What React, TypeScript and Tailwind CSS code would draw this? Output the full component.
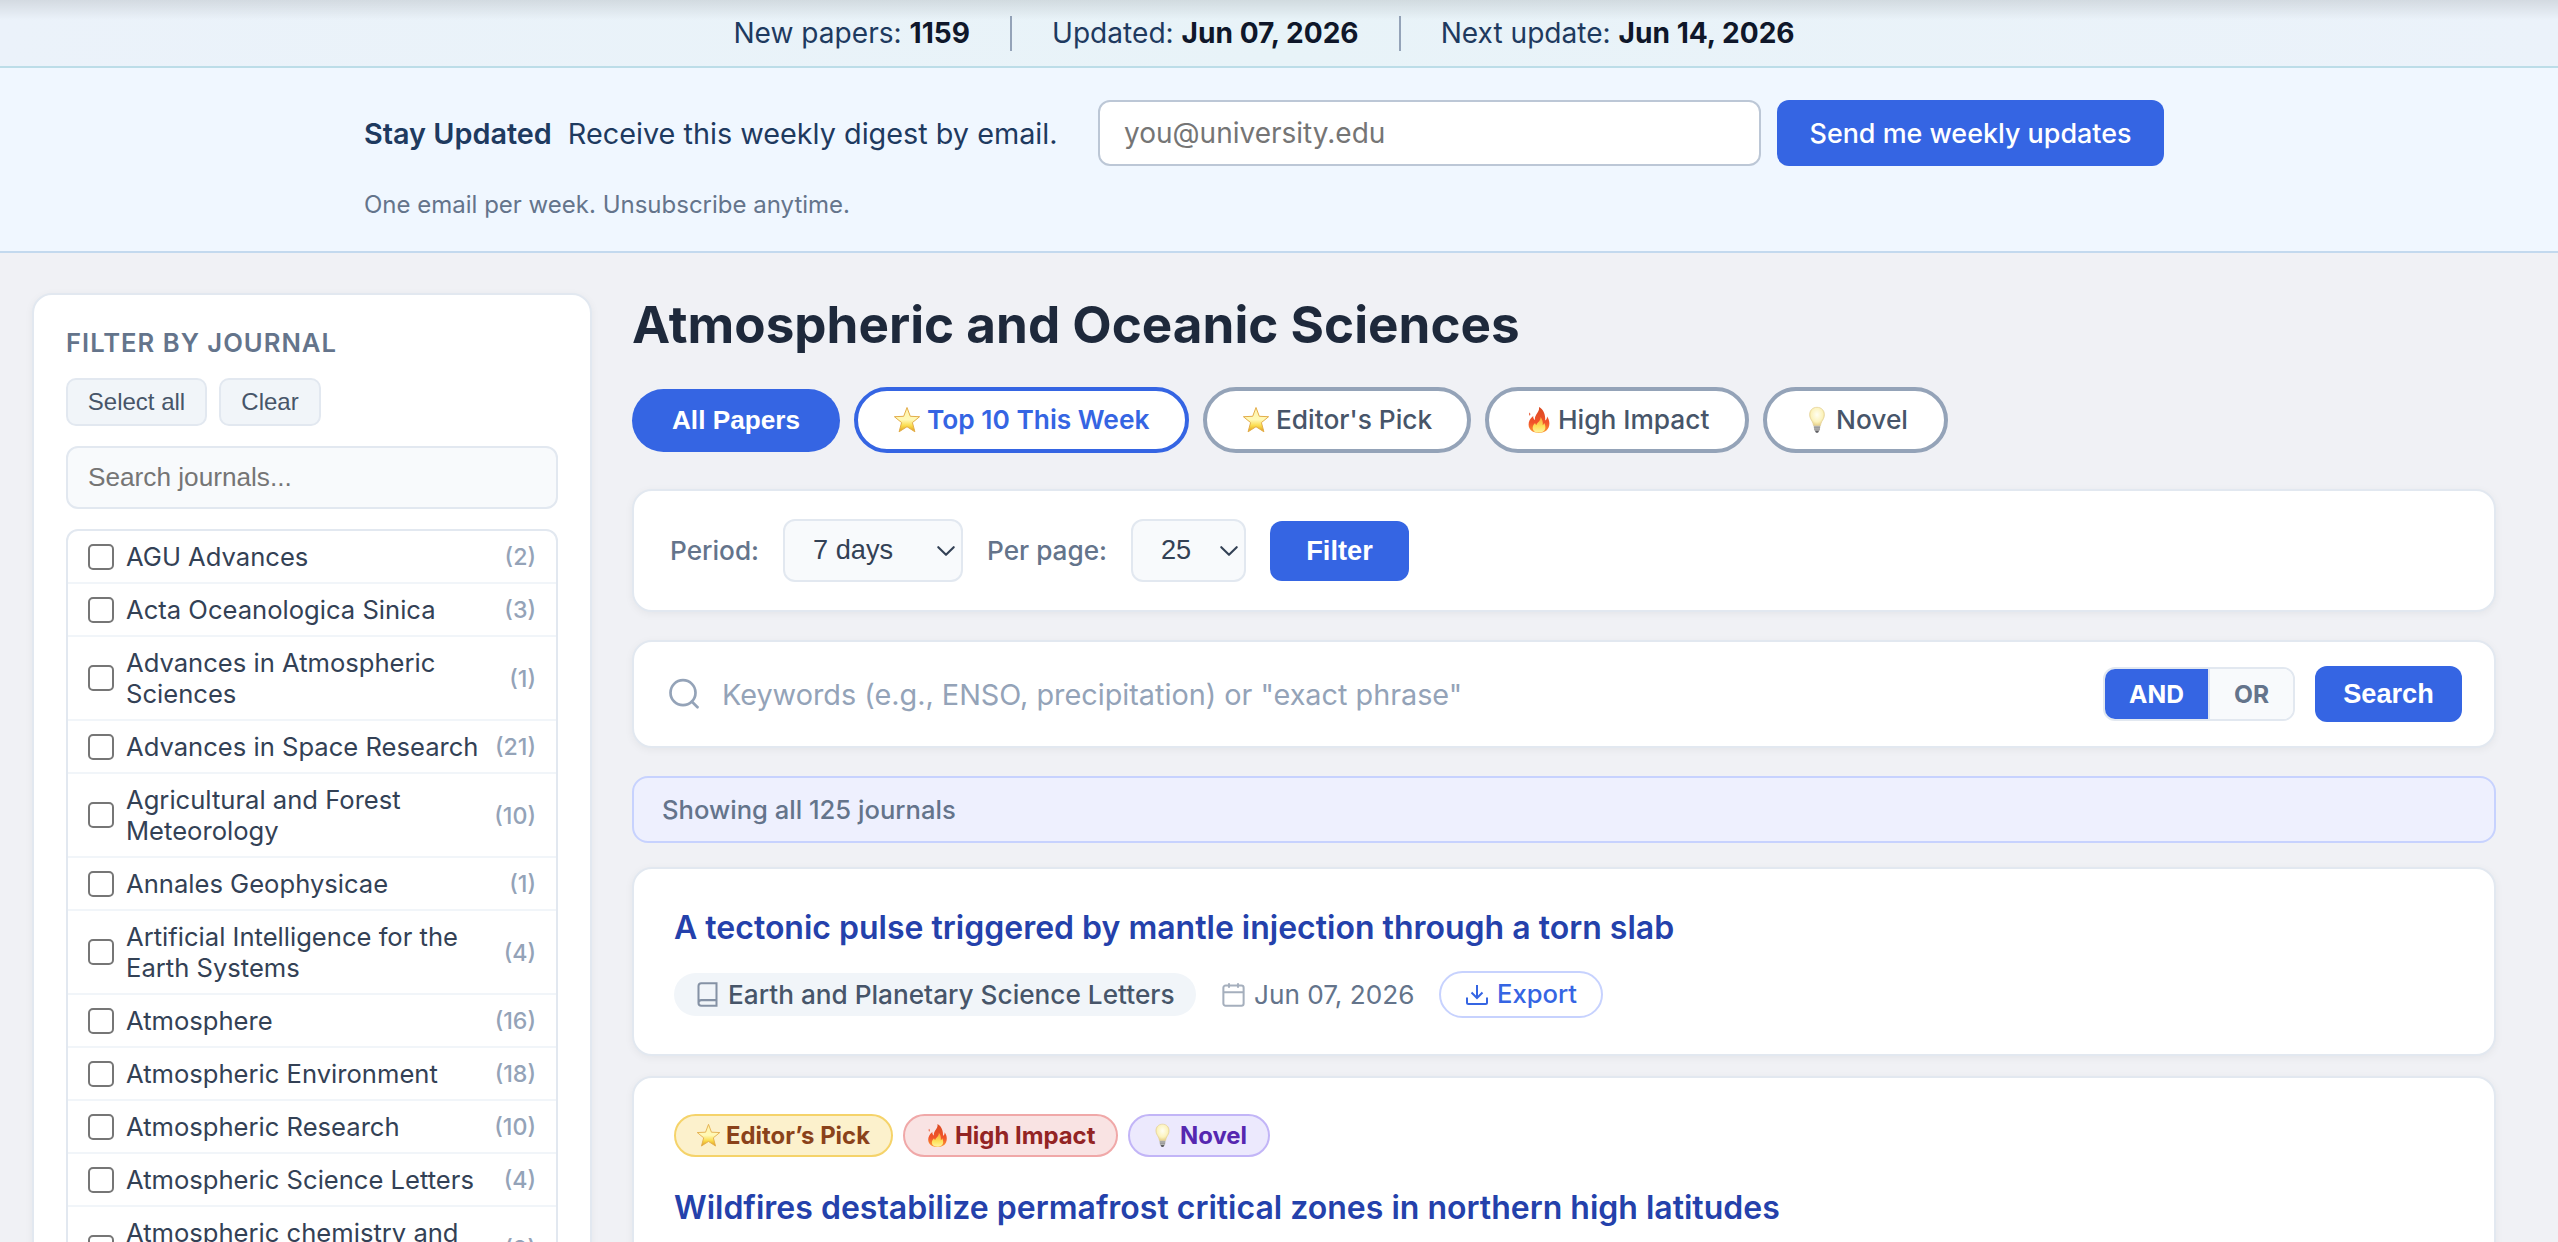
import { useState } from "react"
import type { ReactNode } from "react"

const journals: [string, number][] = [
  ["AGU Advances", 2],
  ["Acta Oceanologica Sinica", 3],
  ["Advances in Atmospheric Sciences", 1],
  ["Advances in Space Research", 21],
  ["Agricultural and Forest Meteorology", 10],
  ["Annales Geophysicae", 1],
  ["Artificial Intelligence for the Earth Systems", 4],
  ["Atmosphere", 16],
  ["Atmospheric Environment", 18],
  ["Atmospheric Research", 10],
  ["Atmospheric Science Letters", 4],
  ["Atmospheric chemistry and physics", 9],
]

/* Emoji icons */
function Star({ className }: { className: string }) {
  return (
    <svg viewBox="0 0 28 28" className={className}>
      <defs>
        <linearGradient id="starFill" x1="0" y1="0" x2="0" y2="1">
          <stop offset="0" stopColor="#fff3a8" />
          <stop offset="0.5" stopColor="#fff9b8" />
          <stop offset="0.75" stopColor="#fbdc4c" />
          <stop offset="1" stopColor="#dd9a1c" />
        </linearGradient>
      </defs>
      <path
        d="M14 1.5 17.3 10.3 26.6 10.7 19.4 16.6 21.9 25.8 14 20.7 6.1 25.8 8.6 16.6 1.4 10.7 10.7 10.3Z"
        fill="url(#starFill)"
        stroke="#e3ad4a"
        strokeWidth="1"
        strokeLinejoin="round"
      />
    </svg>
  )
}

function Flame({ className }: { className: string }) {
  return (
    <svg viewBox="0 0 28 28" className={className}>
      <defs>
        <linearGradient id="flameFill" x1="0" y1="0" x2="0" y2="1">
          <stop offset="0" stopColor="#d94a22" />
          <stop offset="0.6" stopColor="#f2542b" />
          <stop offset="1" stopColor="#fb9a2e" />
        </linearGradient>
        <linearGradient id="flameCore" x1="0" y1="0" x2="0" y2="1">
          <stop offset="0" stopColor="#f9a03a" />
          <stop offset="0.6" stopColor="#fde25a" />
          <stop offset="1" stopColor="#fff3a0" />
        </linearGradient>
      </defs>
      <path
        d="M14 1c.6 3.2-1.2 5.2-2.7 7.6-1.2 1.9-1.7 3.6-1.3 5.4-1.4-.8-1.9-2.2-1.8-4C5 12.6 3.6 15.5 3.6 18.6 3.6 24 8 27 13.9 27c6.2 0 10.5-3.6 10.5-9.4 0-2.9-.9-5.2-2.4-7.2.1 1.9-.5 3.2-1.8 4C20.5 8.6 18.6 3.6 14 1Z"
        fill="url(#flameFill)"
      />
      <path d="M4.500 6.500c-.6 1.200-.5 2.300.2 3.200.9-.9.8-2.100-.2-3.200Z" fill="#e8502a" />
      <path
        d="M15.5 11c.2 2.6-1.1 4.1-2.600 5.600-.8.8-1.3 1.6-1.500 2.500-.8-.5-1.200-1.200-1.300-2.100-1.700 1.700-2.600 3.400-2.400 5.400.3 2.800 2.800 4.200 6.200 4.200 3.800 0 6.500-1.900 6.500-5.300 0-1.600-.4-2.900-1.200-4.200-.2 1-.7 1.700-1.500 2.100.4-3.200-.3-6.100-2.200-8.200Z"
        fill="url(#flameCore)"
      />
    </svg>
  )
}

function Bulb({ className }: { className: string }) {
  return (
    <svg viewBox="0 0 28 28" className={className}>
      <defs>
        <radialGradient id="bulbGlass" cx="0.5" cy="0.4" r="0.6">
          <stop offset="0" stopColor="#fffef2" />
          <stop offset="0.65" stopColor="#fcf3bd" />
          <stop offset="1" stopColor="#e6cf85" />
        </radialGradient>
      </defs>
      <path
        d="M14 1.3C9.5 1.3 6.6 4.5 6.6 8.7c0 3 1.5 4.9 2.7 7 .8 1.4.9 2.8 1.3 4.1h6.8c.4-1.3.5-2.7 1.3-4.1 1.2-2.1 2.7-4 2.7-7 0-4.2-2.9-7.4-7.4-7.4Z"
        fill="url(#bulbGlass)"
        stroke="#e3cf92"
        strokeWidth="0.7"
      />
      <path d="M10.7 19.8h6.6l-.5 4.7h-5.6Z" fill="#b9b9b5" />
      <path d="M10.9 21.3h6.2M11.1 23.1h5.8" stroke="#85858a" strokeWidth="0.7" />
      <path d="M11.7 24.5h4.6L15 26.8h-2Z" fill="#5e5e62" />
    </svg>
  )
}

function Chevron({ className }: { className: string }) {
  return (
    <svg viewBox="0 0 18 10" className={className} fill="none" stroke="#334155" strokeWidth="2.1" strokeLinecap="round" strokeLinejoin="round">
      <path d="M1.3 1.2 9 8.8 16.7 1.2" />
    </svg>
  )
}

function Stat({ label, value }: { label: string; value: string }) {
  return (
    <span>
      {label} <strong className="font-bold text-[#0f172a]">{value}</strong>
    </span>
  )
}

function Tab({ className, children }: { className: string; children: ReactNode }) {
  return (
    <button className={`flex h-[66px] items-center rounded-full border-4 bg-white text-[26.3px] ${className}`}>
      {children}
    </button>
  )
}

function Badge({ className, children }: { className: string; children: ReactNode }) {
  return (
    <span className={`flex h-[43px] items-center rounded-full border-2 text-[23.9px] font-bold ${className}`}>
      {children}
    </span>
  )
}

export default function App() {
  const [mode, setMode] = useState("AND")

  return (
    <div className="h-[1242px] w-full overflow-hidden bg-[#f0f1f5] font-['Inter',sans-serif] text-[#1e293b]">
      {/* Stats bar */}
      <div className="relative flex h-[68px] items-center justify-center border-b-2 border-[#bcdde8] bg-[linear-gradient(90deg,#ebf2fa,#e8f3f8,#ebf2fa)] pr-[30px] text-[28.1px] text-[#1e3a5f]">
        <div className="absolute inset-x-0 top-0 h-[20px] bg-linear-to-b from-black/10 to-transparent" />
        <Stat label="New papers:" value="1159" />
        <span className="mx-10 h-[35px] w-[2px] bg-[#94a3b8]" />
        <Stat label="Updated:" value="Jun 07, 2026" />
        <span className="mx-10 h-[35px] w-[2px] bg-[#94a3b8]" />
        <Stat label="Next update:" value="Jun 14, 2026" />
      </div>

      {/* Newsletter signup */}
      <div className="h-[185px] border-b-2 border-[#c3d9ee] bg-[#f0f7ff] pt-8 pl-[364px]">
        <div className="flex items-center">
          <div className="w-[734px] pt-[2px] text-[28.8px] whitespace-nowrap text-[#1e3a5f]">
            <strong className="mr-4 font-semibold">Stay Updated</strong>
            Receive this weekly digest by email.
          </div>
          <input
            placeholder="you@university.edu"
            className="h-[66px] w-[663px] rounded-xl border-2 border-[#bcc7d6] bg-white px-6 text-[28px] placeholder:text-[#757575]"
          />
          <button className="ml-4 h-[66px] w-[387px] rounded-xl bg-[#3565e3] text-[26.9px] font-medium text-white">
            Send me weekly updates
          </button>
        </div>
        <p className="mt-[21px] text-[24px] leading-[36px] text-[#64748b]">One email per week. Unsubscribe anytime.</p>
      </div>

      <div className="flex pt-10 pl-8">
        {/* Journal filter */}
        <aside className="h-[1100px] w-[560px] shrink-0 rounded-[20px] border-2 border-[#e2e8f0] bg-white px-8 pt-[29px] shadow-[0_2px_8px_rgba(0,0,0,0.05)]">
          <h3 className="text-[25.6px] leading-[38px] font-semibold tracking-[1px] text-[#64748b]">FILTER BY JOURNAL</h3>
          <div className="mt-4 flex gap-3 font-['Liberation_Sans',sans-serif] text-[24px] text-[#475569]">
            <button className="h-12 w-[141px] rounded-[10px] border-2 border-[#e2e8f0] bg-[#f1f5f9]">Select all</button>
            <button className="h-12 w-[102px] rounded-[10px] border-2 border-[#e2e8f0] bg-[#f1f5f9]">Clear</button>
          </div>
          <input
            placeholder="Search journals..."
            className="mt-5 h-[63px] w-full rounded-xl border-2 border-[#e2e8f0] bg-[#f8fafc] px-5 font-['Liberation_Sans',sans-serif] text-[26.2px] placeholder:text-[#757575]"
          />
          <ul className="mt-5 rounded-xl border-2 border-[#e2e8f0]">
            {journals.map(([name, count]) => (
              <li key={name} className="flex items-center border-b-2 border-[#f1f5f9] py-[10px] pr-5 pl-5">
                <span className="mr-3 h-[26px] w-[26px] shrink-0 rounded-[5px] border-2 border-[#767676] bg-white" />
                <span className="flex-1 text-[25.6px] leading-[31px] text-[#334155]">{name}</span>
                <span className="ml-2 pt-px text-[23.2px] leading-[30px] font-medium text-[#94a3b8]">({count})</span>
              </li>
            ))}
          </ul>
        </aside>

        <main className="ml-10 w-[1864px]">
          <h1 className="text-[51.2px] leading-[62px] font-bold text-[#1e293b]">Atmospheric and Oceanic Sciences</h1>

          <div className="mt-8 flex items-center gap-[14px]">
            <button className="h-[63px] w-[208px] rounded-full bg-[#3565e3] pt-[2px] font-['Liberation_Sans',sans-serif] text-[26.2px] font-bold text-white">All Papers</button>
            <Tab className="w-[335px] border-[#3565e3] pl-[35px] font-semibold text-[#3565e3]">
              <Star className="mr-[6px] h-7 w-7" />Top 10 This Week
            </Tab>
            <Tab className="w-[268px] border-[#94a3b8] pl-[35px] font-medium text-[#475569]">
              <Star className="mr-[6px] h-7 w-7" />Editor's Pick
            </Tab>
            <Tab className="w-[264px] border-[#94a3b8] pl-[36px] font-medium text-[#475569]">
              <Flame className="mr-[5px] h-7 w-7" />High Impact
            </Tab>
            <Tab className="w-[185px] border-[#94a3b8] pl-[36px] font-medium text-[#475569]">
              <Bulb className="mr-[5px] h-7 w-7" />Novel
            </Tab>
          </div>

          {/* Period and page size */}
          <div className="mt-9 flex h-[123px] items-center rounded-[20px] border-2 border-[#e2e8f0] bg-white pl-9 text-[26.2px] shadow-[0_2px_8px_rgba(0,0,0,0.05)]">
            <span className="w-[113px] font-medium text-[#64748b]">Period:</span>
            <div className="mr-6 flex h-[63px] w-[180px] items-center justify-between rounded-xl border-2 border-[#e2e8f0] bg-[#f8fafc] pr-[6px] pl-[28px] font-['Liberation_Sans',sans-serif] text-[27.2px] text-[#334155]">
              7 days
              <Chevron className="h-[10px] w-[18px]" />
            </div>
            <span className="w-[144px] font-medium text-[#64748b]">Per page:</span>
            <div className="mr-6 flex h-[63px] w-[115px] items-center justify-between rounded-xl border-2 border-[#e2e8f0] bg-[#f8fafc] pr-[6px] pl-[28px] font-['Liberation_Sans',sans-serif] text-[27.2px] text-[#334155]">
              25
              <Chevron className="h-[10px] w-[18px]" />
            </div>
            <button className="h-[60px] w-[139px] rounded-xl bg-[#3565e3] pt-px font-['Liberation_Sans',sans-serif] text-[27.2px] font-bold text-white">Filter</button>
          </div>

          {/* Keyword search */}
          <div className="mt-7 flex h-[108px] items-center rounded-[20px] border-2 border-[#e2e8f0] bg-white pr-8 pl-[34px] shadow-[0_2px_8px_rgba(0,0,0,0.05)]">
            <svg viewBox="0 0 32 32" className="mr-[22px] h-8 w-8 shrink-0" fill="none" stroke="#94a3b8" strokeWidth="2.7" strokeLinecap="round">
              <circle cx="15" cy="14.7" r="12.5" />
              <path d="m24 23.7 5.5 5.5" />
            </svg>
            <input
              placeholder={'Keywords (e.g., ENSO, precipitation) or "exact phrase"'}
              className="min-w-0 flex-1 pt-px text-[28.8px] placeholder:text-[#94a3b8]"
            />
            <div className="mr-5 flex h-[54px] overflow-hidden rounded-xl border-2 border-[#e2e8f0] text-[24.6px] font-bold">
              <button
                onClick={() => setMode("AND")}
                className={mode === "AND" ? "w-[103px] bg-[#3565e3] text-white" : "w-[103px] bg-[#f8fafc] text-[#64748b]"}
              >
                AND
              </button>
              <button
                onClick={() => setMode("OR")}
                className={mode === "OR" ? "w-[85px] border-l-2 border-[#e2e8f0] bg-[#3565e3] text-white" : "w-[85px] border-l-2 border-[#e2e8f0] bg-[#f8fafc] text-[#64748b]"}
              >
                OR
              </button>
            </div>
            <button className="h-14 w-[147px] rounded-xl bg-[#3565e3] font-['Liberation_Sans',sans-serif] text-[27.2px] font-bold text-white">Search</button>
          </div>

          <div className="mt-7 flex h-[67px] items-center rounded-2xl border-2 border-[#c7d2fe] bg-[#eef0fe] pt-px pl-7 text-[25.6px] font-medium text-[#64748b]">
            Showing all 125 journals
          </div>

          {/* Papers */}
          <article className="mt-6 h-[189px] rounded-[20px] border-2 border-[#e2e8f0] bg-white px-10 pt-9 shadow-[0_2px_8px_rgba(0,0,0,0.05)]">
            <h2 className="text-[32px] leading-[46px] font-semibold text-[#2441ab]">A tectonic pulse triggered by mantle injection through a torn slab</h2>
            <div className="mt-5 flex items-center text-[26.2px]">
              <span className="flex h-[43px] w-[522px] items-center rounded-full bg-[#f1f5f9] pl-5 font-medium text-[#475569]">
                <svg viewBox="0 0 24 24" className="mr-[7px] h-[27px] w-[27px]" fill="none" stroke="#8592a5" strokeWidth="1.8">
                  <path d="M4 19.5V4.5A2.5 2.5 0 0 1 6.5 2H20v20H6.5a2.5 2.5 0 0 1 0-5H20" />
                </svg>
                Earth and Planetary Science Letters
              </span>
              <span className="ml-6 flex w-[219px] items-center text-[#64748b]">
                <svg viewBox="0 0 24 24" className="mr-[7px] h-[27px] w-[27px]" fill="none" stroke="#a5afbd" strokeWidth="1.8">
                  <rect x="3" y="4" width="18" height="18" rx="2" />
                  <path d="M8 2v4M16 2v4M3 10h18" />
                </svg>
                Jun 07, 2026
              </span>
              <span className="flex h-[47px] w-[164px] items-center rounded-full border-2 border-[#c7d2fe] pl-6 text-[25.6px] font-medium text-[#3565e3]">
                <svg viewBox="0 0 24 24" className="mr-2 h-6 w-6" fill="none" stroke="currentColor" strokeWidth="2">
                  <path d="M22 14.5v5a1.5 1.5 0 0 1-1.500 1.500h-17A1.500 1.500 0 0 1 2 19.500v-5M6.500 9.500 12 15l5.500-5.500M12 15V2" />
                </svg>
                Export
              </span>
            </div>
          </article>

          <article className="mt-5 h-[300px] rounded-[20px] border-2 border-[#e2e8f0] bg-white px-10 pt-9 shadow-[0_2px_8px_rgba(0,0,0,0.05)]">
            <div className="flex gap-[10px]">
              <Badge className="w-[219px] border-[#f5d36a] bg-[#fcf1cc] pl-5 text-[#8a421a]">
                <Star className="mr-[5px] h-[25px] w-[25px]" />Editor’s Pick
              </Badge>
              <Badge className="w-[215px] border-[#f0a8a8] bg-[#f9e3e3] pl-5 text-[#932424]">
                <Flame className="mr-[5px] h-[25px] w-[25px]" />High Impact
              </Badge>
              <Badge className="w-[142px] border-[#c2b5f7] bg-[#ece9fd] pl-5 text-[#5627b0]">
                <Bulb className="mr-[5px] h-[25px] w-[25px]" />Novel
              </Badge>
            </div>
            <h2 className="mt-[28px] text-[32px] leading-[46px] font-semibold text-[#2441ab]">Wildfires destabilize permafrost critical zones in northern high latitudes</h2>
          </article>
        </main>
      </div>
    </div>
  )
}
